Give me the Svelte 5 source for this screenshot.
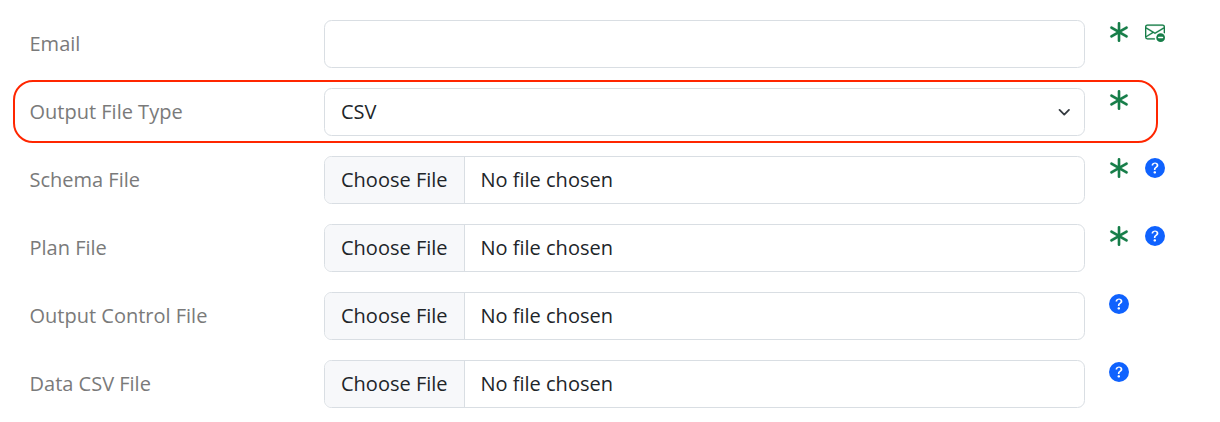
<script>
  const files = [
    { label: 'Schema File', required: true },
    { label: 'Plan File', required: true },
    { label: 'Output Control File', required: false },
    { label: 'Data CSV File', required: false }
  ];
</script>

{#snippet asterisk()}
  <svg class="icon green" viewBox="0 0 16 16" fill="currentColor" stroke="currentColor" stroke-width=".1" aria-hidden="true"><path d="M8 0a1 1 0 0 1 1 1v5.268l4.562-2.634a1 1 0 1 1 1 1.732L10 8l4.562 2.634a1 1 0 1 1-1 1.732L9 9.732V15a1 1 0 1 1-2 0V9.732l-4.562 2.634a1 1 0 1 1-1-1.732L6 8 1.438 5.366a1 1 0 0 1 1-1.732L7 6.268V1a1 1 0 0 1 1-1"/></svg>
{/snippet}

{#snippet help()}
  <svg class="icon blue" viewBox="0 0 16 16" fill="currentColor" aria-hidden="true"><path d="M16 8A8 8 0 1 1 0 8a8 8 0 0 1 16 0M5.496 6.033h.825c.138 0 .248-.113.266-.25.09-.656.54-1.134 1.342-1.134.686 0 1.314.343 1.314 1.168 0 .635-.374.927-.965 1.371-.673.489-1.206 1.06-1.168 1.987l.003.217a.25.25 0 0 0 .25.246h.811a.25.25 0 0 0 .25-.25v-.105c0-.718.273-.927 1.01-1.486.609-.463 1.244-.977 1.244-2.056 0-1.511-1.276-2.241-2.673-2.241-1.267 0-2.655.59-2.75 2.286a.237.237 0 0 0 .241.247m2.325 6.443c.61 0 1.029-.394 1.029-.927 0-.552-.42-.94-1.029-.94-.584 0-1.009.388-1.009.94 0 .533.425.927 1.01.927z"/></svg>
{/snippet}

<form>
  <div class="row">
    <span class="label">Email</span>
    <div class="control"></div>
    <div class="icons">
      {@render asterisk()}
      <svg class="icon green" viewBox="0 0 16 16" fill="currentColor" aria-hidden="true">
        <path stroke="currentColor" stroke-width=".15" d="M2 2a2 2 0 0 0-2 2v8.01A2 2 0 0 0 2 14h5.5a.5.5 0 0 0 0-1H2a1 1 0 0 1-.966-.741l5.64-3.471L8 9.583l7-4.2V8.5a.5.5 0 0 0 1 0V4a2 2 0 0 0-2-2zm3.708 6.208L1 11.105V5.383zM1 4.217V4a1 1 0 0 1 1-1h12a1 1 0 0 1 1 1v.217l-7 4.2z"/>
        <circle cx="12.5" cy="12.5" r="3.5"/>
        <path d="M11 12.45h3" stroke="#fff" stroke-width="1.15" stroke-linecap="round"/>
      </svg>
    </div>
  </div>
  <div class="row highlight">
    <span class="label">Output File Type</span>
    <div class="control select">
      <span>CSV</span>
      <svg class="chevron" viewBox="0 0 16 16" fill="none" stroke="#343a40" stroke-width="2.3" stroke-linecap="round" stroke-linejoin="round"><path d="m2 5 6 6 6-6"/></svg>
    </div>
    <div class="icons">{@render asterisk()}</div>
  </div>
  {#each files as file}
    <div class="row">
      <span class="label">{file.label}</span>
      <div class="control">
        <span class="choose">Choose File</span>
        <span class="filename">No file chosen</span>
      </div>
      <div class="icons">
        {#if file.required}{@render asterisk()}{/if}
        {@render help()}
      </div>
    </div>
  {/each}
</form>

<style>
  :global(body) { margin: 0; background: #fff; }
  form {
    box-sizing: border-box;
    width: 1220px;
    height: 422px;
    padding: 20px 30px 0 29.5px;
    display: flex;
    flex-direction: column;
    gap: 20px;
    font: 20px/30px "Open Sans", "Noto Sans", sans-serif;
    color: #212529;
  }
  .row {
    position: relative;
    height: 48px;
    display: grid;
    grid-template-columns: 294.5px 761px 1fr;
  }
  .label { align-self: center; color: #7a7a7a; white-space: nowrap; }
  .control {
    box-sizing: border-box;
    display: flex;
    align-items: center;
    border: 1px solid #d9dee3;
    border-radius: 7.5px;
    overflow: hidden;
    background: #fff;
  }
  .select { justify-content: space-between; padding: 0 14px 0 16px; }
  .chevron { width: 12.5px; height: 12.5px; }
  .choose {
    box-sizing: border-box;
    width: 140px;
    height: 100%;
    padding: 8px 0 8px 16px;
    border-right: 1px solid #d9dee3;
    background: #f7f8fa;
    white-space: nowrap;
  }
  .filename { padding-left: 15.5px; }
  .icons { display: flex; gap: 16px; padding: 2px 0 0 24px; }
  .icon { width: 20px; height: 20px; flex: none; }
  .green { color: #177e49; }
  .blue { color: #0f62fe; }
  .highlight::before {
    content: "";
    position: absolute;
    box-sizing: border-box;
    left: -16.5px;
    top: -8px;
    width: 1145px;
    height: 63px;
    border: 2px solid #ff2600;
    border-radius: 20px;
    pointer-events: none;
  }
</style>
